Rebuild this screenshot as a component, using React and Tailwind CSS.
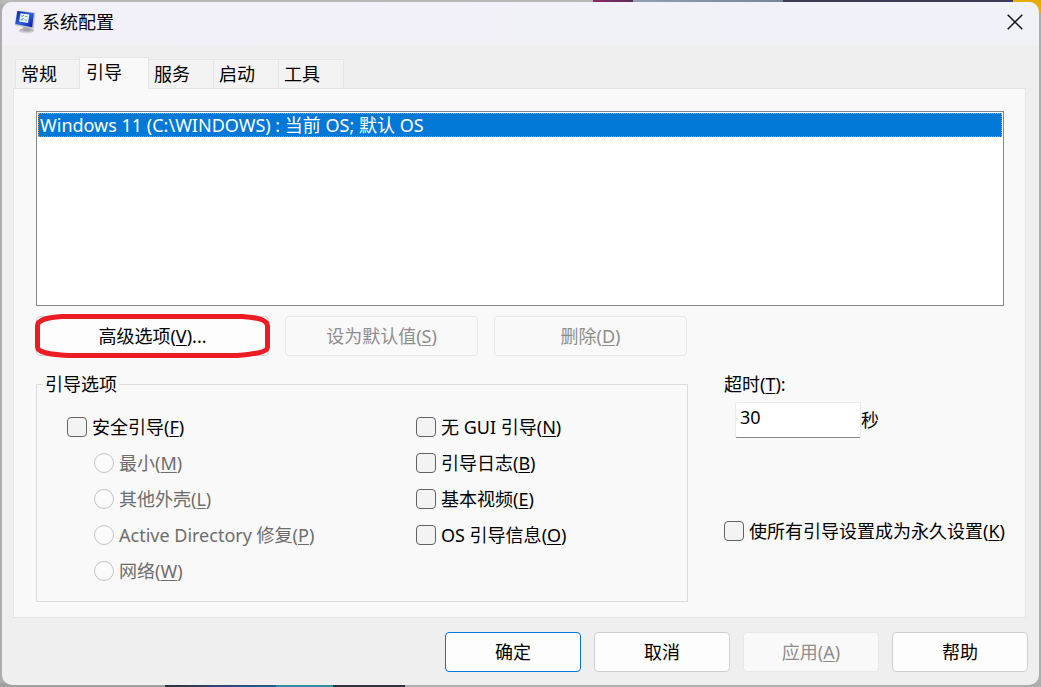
import { useState } from "react";

const TABS = ["常规", "引导", "服务", "启动", "工具"];

const SAFE_BOOT_MODES = [
  { id: "minimal", label: "最小", hotkey: "M" },
  { id: "shell", label: "其他外壳", hotkey: "L" },
  { id: "ad", label: "Active Directory 修复", hotkey: "P" },
  { id: "network", label: "网络", hotkey: "W" },
];

const BOOT_FLAGS = [
  { id: "nogui", label: "无 GUI 引导", hotkey: "N" },
  { id: "bootlog", label: "引导日志", hotkey: "B" },
  { id: "basevideo", label: "基本视频", hotkey: "E" },
  { id: "osinfo", label: "OS 引导信息", hotkey: "O" },
];

function Hotkey({ label, hotkey, suffix = "" }) {
  return (
    <span className="whitespace-nowrap">
      {label}(<span className="underline decoration-1 underline-offset-2">{hotkey}</span>){suffix}
    </span>
  );
}

function Check({ label, hotkey, checked, onChange }) {
  return (
    <label className="flex h-9 items-center gap-[5px]">
      <input
        type="checkbox"
        checked={checked}
        onChange={(e) => onChange(e.target.checked)}
        className="size-5 shrink-0 appearance-none rounded-[4px] border border-[#626262] bg-[#f3f3f3] checked:bg-[#0078d4]"
      />
      <Hotkey label={label} hotkey={hotkey} />
    </label>
  );
}

function PushButton({ children, className = "", disabled, primary, onClick }) {
  const look = disabled
    ? "border-[#e8e8e8] bg-[#f9f9f9] text-[#8e8e8e]"
    : primary
      ? "border-[#0078d4] bg-[#fdfdfd]"
      : "border-[#d0d0d0] bg-[#fdfdfd]";
  return (
    <button
      type="button"
      disabled={disabled}
      onClick={onClick}
      className={`h-10 rounded-[4px] border text-center ${look} ${className}`}
    >
      {children}
    </button>
  );
}

function AppIcon() {
  return (
    <svg className="h-6 w-[22px]" viewBox="0 0 22 24" aria-hidden="true">
      <defs>
        <linearGradient id="screen" x1="0" y1="0" x2="1" y2="1">
          <stop offset="0" stopColor="#0b1f9c" />
          <stop offset="0.5" stopColor="#2f62dc" />
          <stop offset="1" stopColor="#0a16a0" />
        </linearGradient>
        <linearGradient id="stand" x1="0" y1="0" x2="0" y2="1">
          <stop offset="0" stopColor="#9a9ca0" />
          <stop offset="1" stopColor="#e2e3e6" />
        </linearGradient>
      </defs>
      <ellipse cx="12.500" cy="20.800" rx="7.500" ry="2.800" fill="url(#stand)" />
      <path d="M9 16l7 1.500v4H10z" fill="#a3a5aa" />
      <path d="M3 .4L21.400 2.600 19.800 19 .6 15.200z" fill="#c3c5ca" />
      <path d="M3.400 1.100L19.800 3.300 18.200 17.200 1.300 14z" fill="url(#screen)" />
      <path d="M6.500 3.300L15.300 4.400 14 13 5.200 11.400z" fill="#eaf3fc" />
      <path d="M7.400 5.800l1 .9 1.500-2M6.800 9.200l1 1 1.500-2.100" fill="none" stroke="#18a0b8" strokeWidth="1" />
      <path d="M11 6.300l2.600.4M10.500 9.800l2.600.5" stroke="#8fa3c0" strokeWidth="1" />
    </svg>
  );
}

function TitleBar() {
  return (
    <header className="flex h-[43px] shrink-0 items-center justify-between bg-gradient-to-r from-[#f3f0f8] to-[#f0f2f8] pb-[3px] pl-3 pr-4">
      <div className="flex items-center gap-[6px]">
        <AppIcon />
        <h1>系统配置</h1>
      </div>
      <button type="button" aria-label="关闭">
        <svg className="size-4" viewBox="0 0 16 16" fill="none" stroke="#111" strokeWidth="1.5">
          <path d="M.7.7l14.600 14.600M15.300.7L.7 15.300" />
        </svg>
      </button>
    </header>
  );
}

// Desktop strips that peek out around the window edge
function Desktop() {
  return (
    <div className="absolute inset-0 -z-10 flex flex-col justify-between bg-[#adadad]" aria-hidden="true">
      <div className="flex">
        <div className="h-1 w-[57%] bg-[#b8b8b8]" />
        <div className="h-1 w-10 bg-gradient-to-r from-[#8a2a6a] to-[#5a2a58]" />
        <div className="h-1 w-[150px] bg-gradient-to-r from-[#8f9fb4] to-[#75869c]" />
        <div className="h-1 flex-1 bg-[#3d3b58]" />
        <div className="h-[14px] w-7 bg-[#e8ac08]" />
      </div>
      <div className="flex">
        <div className="h-1 w-[165px] bg-[#a2a2a2]" />
        <div className="h-1 w-[111px] bg-gradient-to-r from-[#2b313e] via-[#2c4a70] to-[#2b5a86]" />
        <div className="h-1 w-[57px] bg-[#2f8f9b]" />
        <div className="h-1 w-[72px] bg-[#2d3547]" />
      </div>
    </div>
  );
}

export default function App() {
  const [tab, setTab] = useState("引导");
  const [safeBoot, setSafeBoot] = useState(false);
  const [mode, setMode] = useState("");
  const [flags, setFlags] = useState({});
  const [timeout, setTimeoutValue] = useState("30");
  const [permanent, setPermanent] = useState(false);

  return (
    <div className="relative isolate flex min-h-screen p-[2px] font-['Noto_Sans','Noto_Sans_CJK_SC',sans-serif] text-lg leading-6 text-black">
      <Desktop />
      <div className="flex flex-1 flex-col overflow-hidden rounded-[10px] bg-[#efefef]">
        <TitleBar />

        <main className="flex flex-1 flex-col px-[11px] pt-3">
          <div role="tablist" className="flex items-end pl-[2px]">
            {TABS.map((name) => (
              <button
                key={name}
                type="button"
                role="tab"
                aria-selected={tab === name}
                onClick={() => setTab(name)}
                className={
                  tab === name
                    ? "z-10 -mb-px -ml-px h-8 w-[70px] border border-b-0 border-[#e5e5e5] bg-[#f9f9f9] pb-1 pl-[6px] text-left"
                    : "h-[29px] w-[65px] border border-b-0 border-[#e5e5e5] bg-[#f3f3f3] pl-[5px] text-left not-first:border-l-0"
                }
              >
                {name}
              </button>
            ))}
          </div>

          <section className="mr-[2px] flex flex-1 flex-col border border-[#e5e5e5] bg-[#f9f9f9] pb-[15px] pl-[22px] pr-[21px] pt-[22px]">
            <ul role="listbox" className="min-h-[195px] flex-1 border border-[#828790] bg-white p-px">
              <li
                role="option"
                aria-selected="true"
                className="h-6 border border-dotted border-[#ff8728] bg-[#0078d7] pl-px leading-[22px] text-white"
              >
                Windows 11 (C:\WINDOWS) : 当前 OS; 默认 OS
              </li>
            </ul>

            <div className="mt-[10px] flex gap-4">
              <div className="relative flex">
                <PushButton className="w-[233px]">
                  <Hotkey label="高级选项" hotkey="V" suffix="..." />
                </PushButton>
                <svg
                  className="pointer-events-none absolute -left-px -top-[2px] h-11 w-[235px]"
                  viewBox="0 0 235 44"
                  fill="none"
                  stroke="#ed1c24"
                  strokeWidth="5"
                  aria-hidden="true"
                >
                  <path d="M27 2.500H207C223 3.500 232.500 6 232.500 12V33C232.500 38 221 40 202 41.500H33C14 40.500 2.500 38 2.500 33V12C2.500 6 11 3.500 27 2.500Z" />
                </svg>
              </div>
              <PushButton className="w-[193px]" disabled>
                <Hotkey label="设为默认值" hotkey="S" />
              </PushButton>
              <PushButton className="w-[193px]" disabled>
                <Hotkey label="删除" hotkey="D" />
              </PushButton>
            </div>

            <div className="mt-4 flex gap-9">
              <fieldset className="flex h-[230px] w-[652px] border border-[#dcdcdc] pl-[30px] pt-[13px]">
                <legend className="-ml-6 px-[2px]">引导选项</legend>
                <div className="w-[349px]">
                  <Check label="安全引导" hotkey="F" checked={safeBoot} onChange={setSafeBoot} />
                  <div className="pl-[27px]">
                    {SAFE_BOOT_MODES.map((m) => (
                      <label
                        key={m.id}
                        className={`flex h-9 items-center gap-[5px] ${safeBoot ? "" : "text-[#6d6d6d]"}`}
                      >
                        <input
                          type="radio"
                          name="safeboot"
                          disabled={!safeBoot}
                          checked={mode === m.id}
                          onChange={() => setMode(m.id)}
                          className="size-5 shrink-0 appearance-none rounded-full border border-[#c4c4c4] bg-[#fbfbfb] checked:border-[6px] checked:border-[#0078d4]"
                        />
                        <Hotkey label={m.label} hotkey={m.hotkey} />
                      </label>
                    ))}
                  </div>
                </div>
                <div>
                  {BOOT_FLAGS.map((f) => (
                    <Check
                      key={f.id}
                      label={f.label}
                      hotkey={f.hotkey}
                      checked={!!flags[f.id]}
                      onChange={(on) => setFlags({ ...flags, [f.id]: on })}
                    />
                  ))}
                </div>
              </fieldset>

              <div className="min-w-0 flex-1">
                <label htmlFor="timeout">
                  <Hotkey label="超时" hotkey="T" suffix=":" />
                </label>
                <div className="mb-[75px] mt-[6px] flex items-center pl-[11px]">
                  <input
                    id="timeout"
                    type="text"
                    value={timeout}
                    onChange={(e) => setTimeoutValue(e.target.value)}
                    className="h-9 w-[126px] rounded-[2px] border border-[#ebebeb] border-b-[#868686] bg-white pb-[6px] pl-1 outline-none"
                  />
                  <span>秒</span>
                </div>
                <Check label="使所有引导设置成为永久设置" hotkey="K" checked={permanent} onChange={setPermanent} />
              </div>
            </div>
          </section>

          <footer className="flex justify-end gap-[13px] pb-[13px] pt-[14px]">
            <PushButton className="w-[136px]" primary>
              确定
            </PushButton>
            <PushButton className="w-[136px]">取消</PushButton>
            <PushButton className="w-[136px]" disabled>
              <Hotkey label="应用" hotkey="A" />
            </PushButton>
            <PushButton className="w-[136px]">帮助</PushButton>
          </footer>
        </main>
      </div>
    </div>
  );
}
